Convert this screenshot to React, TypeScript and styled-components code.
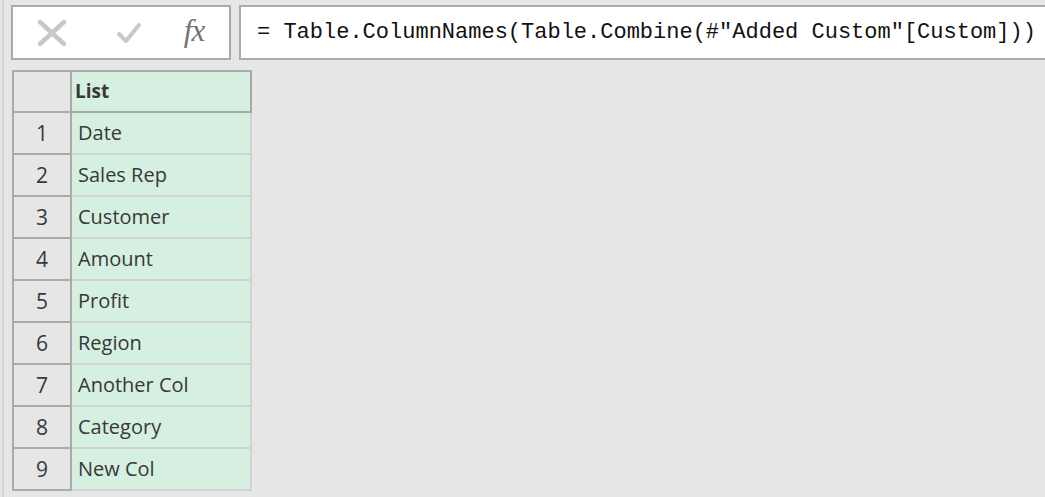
import React from "react";
import styled, { createGlobalStyle } from "styled-components";

const Global = createGlobalStyle`
  html, body { margin: 0; padding: 0; background: #e6e6e6; }
  body { font-family: "Segoe UI", "Open Sans", "Noto Sans", sans-serif; }
  * { box-sizing: border-box; }
`;

const Page = styled.div`
  margin-left: 2px;
  border-left: 2px solid #d3d3d3;
  min-height: 497px;
  padding: 5px 0 0 7px;
  display: flex;
  flex-direction: column;
  gap: 10px;
  overflow: hidden;
`;

const Toolbar = styled.div`
  display: flex;
  gap: 8px;
  height: 55px;
`;

const IconBox = styled.div`
  flex: 0 0 220px;
  background: #ffffff;
  border: 2px solid #ababab;
  display: flex;
  align-items: center;
  padding-left: 24px;
`;

const IconSlot = styled.div<{ $w: number; $offset: number }>`
  width: ${(p) => p.$w}px;
  margin-left: ${(p) => p.$offset}px;
  display: flex;
  align-items: center;
  justify-content: center;
`;

const Fx = styled.span`
  font-family: "Liberation Serif", "Times New Roman", serif;
  font-style: italic;
  font-size: 31px;
  color: #737373;
  letter-spacing: -1px;
  line-height: 1;
  margin-top: -4px;
`;

const FormulaBox = styled.div`
  flex: 1 0 auto;
  min-width: 820px;
  background: #ffffff;
  border: 2px solid #ababab;
  border-right: none;
  display: flex;
  align-items: center;
  padding-left: 16px;
  font-family: "Liberation Mono", "DejaVu Sans Mono", monospace;
  font-size: 22px;
  color: #111111;
  white-space: pre;
`;

const Table = styled.div`
  display: grid;
  grid-template-columns: 58px 180px;
  width: 240px;
  margin-left: 1px;
  border-left: 2px solid #ababab;
  border-top: 2px solid #ababab;
`;

const NumCell = styled.div<{ $head?: boolean }>`
  height: ${(p) => (p.$head ? 41 : 42)}px;
  background: #e6e6e6;
  border-right: 2px solid #ababab;
  border-bottom: 2px solid #ababab;
  display: flex;
  align-items: center;
  justify-content: center;
  font-size: 21px;
  color: #383838;
`;

const DataCell = styled.div<{ $head?: boolean }>`
  height: ${(p) => (p.$head ? 41 : 42)}px;
  background: #d5efe0;
  border-right: 2px solid ${(p) => (p.$head ? "#a4a9a6" : "#d1d3d2")};
  border-bottom: 2px solid ${(p) => (p.$head ? "#a4a9a6" : "#d1d3d2")};
  display: flex;
  align-items: center;
  padding-left: ${(p) => (p.$head ? 3 : 6)}px;
  font-size: ${(p) => (p.$head ? 19 : 20)}px;
  font-weight: ${(p) => (p.$head ? 700 : 400)};
  color: #383838;
  padding-bottom: 1px;
`;

const rows = [
  "Date",
  "Sales Rep",
  "Customer",
  "Amount",
  "Profit",
  "Region",
  "Another Col",
  "Category",
  "New Col",
];

export default function App() {
  return (
    <>
      <Global />
      <Page>
        <Toolbar>
          <IconBox>
            <IconSlot $w={30} $offset={0}>
              <svg width="30" height="26" viewBox="0 0 30 26">
                <path
                  d="M3 2 L27 24 M27 2 L3 24"
                  stroke="#c8c8c8"
                  strokeWidth="4.5"
                  strokeLinecap="round"
                  fill="none"
                />
              </svg>
            </IconSlot>
            <IconSlot $w={24} $offset={50}>
              <svg width="24" height="22" viewBox="0 0 24 22">
                <path
                  d="M2 12 L9 19 L22 3"
                  stroke="#c8c8c8"
                  strokeWidth="4"
                  strokeLinecap="round"
                  strokeLinejoin="round"
                  fill="none"
                />
              </svg>
            </IconSlot>
            <IconSlot $w={24} $offset={41}>
              <Fx>fx</Fx>
            </IconSlot>
          </IconBox>
          <FormulaBox>{'= Table.ColumnNames(Table.Combine(#"Added Custom"[Custom]))'}</FormulaBox>
        </Toolbar>
        <Table>
          <NumCell $head />
          <DataCell $head>List</DataCell>
          {rows.map((r, i) => (
            <React.Fragment key={r}>
              <NumCell>{i + 1}</NumCell>
              <DataCell>{r}</DataCell>
            </React.Fragment>
          ))}
        </Table>
      </Page>
    </>
  );
}
